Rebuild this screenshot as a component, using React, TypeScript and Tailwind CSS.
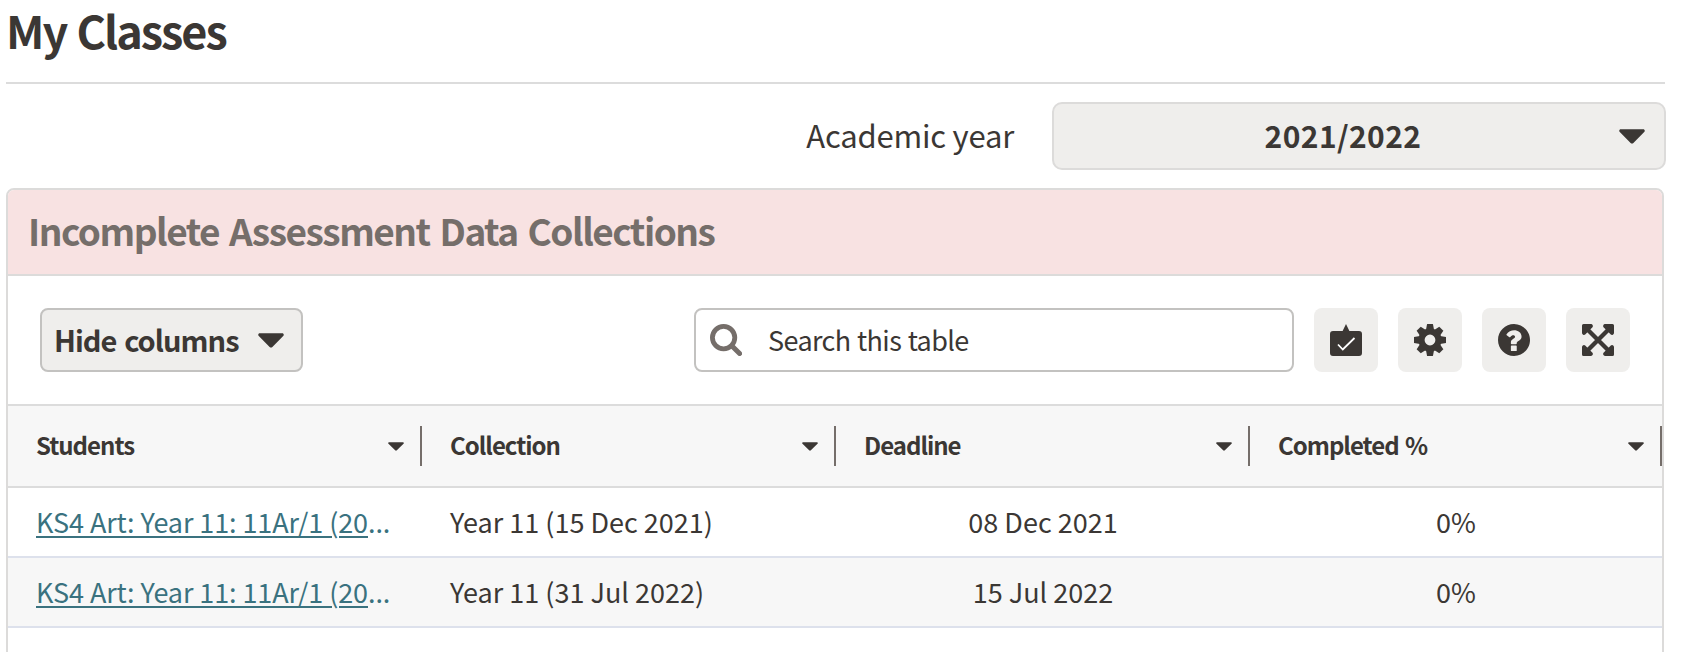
import { useState } from 'react'
import { clsx } from 'clsx'

const COLUMNS = [
  { key: 'students', label: 'Students' },
  { key: 'collection', label: 'Collection' },
  { key: 'deadline', label: 'Deadline' },
  { key: 'completed', label: 'Completed %' },
]

const ROWS = [
  { students: 'KS4 Art: Year 11: 11Ar/1 (20', collection: 'Year 11 (15 Dec 2021)', deadline: '08 Dec 2021', completed: '0%' },
  { students: 'KS4 Art: Year 11: 11Ar/1 (20', collection: 'Year 11 (31 Jul 2022)', deadline: '15 Jul 2022', completed: '0%' },
]

function Caret({ className }: { className?: string }) {
  return (
    <svg viewBox="0 0 26 15" preserveAspectRatio="none" className={clsx('shrink-0 fill-current', className)}>
      <path d="M1.8 0.3h22.4c1.5 0 2.1 1.7 1 2.8L14.4 13.9c-.8.8-2 .8-2.8 0L.8 3.1C-.3 2 .3.3 1.8.3Z" />
    </svg>
  )
}

function SearchIcon() {
  return (
    <svg viewBox="0 0 32 32" className="size-8 shrink-0 text-[#756e6a]" fill="none" stroke="currentColor">
      <circle cx="13.6" cy="13.6" r="11.2" strokeWidth="4.8" />
      <path d="M22 22l7.6 7.6" strokeWidth="5" strokeLinecap="round" />
    </svg>
  )
}

function CalendarIcon() {
  return (
    <svg viewBox="0 0 32 32" className="size-8">
      <path fill="currentColor" d="M16 0l3.4 7H29a3 3 0 0 1 3 3v19a3 3 0 0 1-3 3H3a3 3 0 0 1-3-3V10a3 3 0 0 1 3-3h9.6Z" />
      <path d="M8 20.5l4.800 5L24.5 14" fill="none" stroke="white" strokeWidth="1.8" />
    </svg>
  )
}

function GearIcon() {
  return (
    <svg viewBox="0 0 32 32" className="size-8" fill="currentColor">
      <circle cx="16" cy="16" r="8.5" fill="none" stroke="currentColor" strokeWidth="6.2" />
      {[0, 45, 90, 135, 180, 225, 270, 315].map(deg => (
        <path key={deg} d="M13.1 0h5.800l1.200 6h-8.200Z" transform={`rotate(${deg} 16 16)`} />
      ))}
    </svg>
  )
}

function HelpIcon() {
  return (
    <svg viewBox="0 0 512 512" className="size-8" fill="currentColor">
      <path d="M256 0C114.6 0 0 114.6 0 256s114.6 256 256 256 256-114.6 256-256S397.4 0 256 0Zm44 422c0 6-5 11-11 11h-72c-6 0-11-5-11-11v-68c0-6 5-11 11-11h72c6 0 11 5 11 11v68Zm77-218c0 61-70 66-77 97v11c0 6-5 11-11 11h-72c-6 0-11-5-11-11v-19c0-49 67-57 67-88 0-33-50-37-75 3-4 6-11 7-16 3l-42-30c-5-4-6-11-3-16 63-99 240-78 240 39Z" />
    </svg>
  )
}

function ExpandIcon() {
  return (
    <svg viewBox="0 0 32 32" className="size-8" fill="currentColor">
      <path d="M4 4l24 24M28 4L4 28" stroke="currentColor" strokeWidth="4.3" />
      <path d="M1.5 0H9a2 2 0 0 1 1.5 3.2L3.2 10.5A2 2 0 0 1 0 9V1.5A1.5 1.5 0 0 1 1.5 0ZM30.5 0H23a2 2 0 0 0-1.5 3.2l7.3 7.3A2 2 0 0 0 32 9V1.5A1.5 1.5 0 0 0 30.5 0ZM1.5 32H9a2 2 0 0 0 1.5-3.2l-7.3-7.3A2 2 0 0 0 0 23v7.5A1.5 1.5 0 0 0 1.5 32ZM30.5 32H23a2 2 0 0 1-1.5-3.2l7.3-7.3A2 2 0 0 1 32 23v7.5a1.5 1.5 0 0 1-1.5 1.5Z" />
    </svg>
  )
}

const ACTIONS = [
  { label: 'Calendar', Icon: CalendarIcon },
  { label: 'Settings', Icon: GearIcon },
  { label: 'Help', Icon: HelpIcon },
  { label: 'Full screen', Icon: ExpandIcon },
]

export default function App() {
  const [query, setQuery] = useState('')

  return (
    <div className="h-[652px] w-[1682px] overflow-hidden bg-white pl-1.5 font-['Noto_Sans_CJK_SC','Noto_Sans',sans-serif] text-[#3b3734]">
      <h1 className="h-[84px] w-[1659px] border-b-2 border-[#dcdcdc] text-[45px] leading-[60px] font-bold tracking-[-2px] [word-spacing:2px]">
        My Classes
      </h1>

      <div className="flex h-[104px] w-[1660px] items-center justify-end gap-[38px]">
        <span className="pb-0.5 text-[31px] tracking-[-0.2px]">Academic year</span>
        <button className="flex h-[68px] w-[614px] items-center rounded-[10px] border-2 border-[#dcdbda] bg-[#efeeec] pr-[19px] pl-[13px]">
          <span className="flex-1 pb-0.5 text-center text-[30px] font-bold tracking-[0.4px]">2021/2022</span>
          <Caret className="h-[15px] w-[26px]" />
        </button>
      </div>

      <section className="h-[480px] w-[1658px] overflow-hidden rounded-t-lg border-2 border-[#dcdbda]">
        <h2 className="h-[86px] border-b-2 border-[#dcdbda] bg-[#f8e2e2] pl-5 text-[37px] leading-[80px] font-bold tracking-[-1.5px] text-[#756e6a] [word-spacing:3px]">
          Incomplete Assessment Data Collections
        </h2>

        <div className="flex h-32 items-center gap-5 pr-8 pl-8">
          <button className="mr-auto flex h-16 w-[263px] items-center justify-between rounded-lg border-2 border-[#c3c2c0] bg-[#efeeec] pr-[17px] pl-3 text-[29px] font-bold tracking-[-0.95px] whitespace-nowrap [word-spacing:2px]">
            <span>Hide columns</span>
            <Caret className="h-[15px] w-[26px]" />
          </button>
          <label className="flex h-16 w-[600px] items-center gap-[26px] rounded-lg border-2 border-[#c3c2c0] pl-3.5">
            <SearchIcon />
            <input
              value={query}
              onChange={e => setQuery(e.target.value)}
              placeholder="Search this table"
              className="w-[480px] text-[27px] tracking-[-0.6px] outline-none placeholder:text-[#3b3734] [word-spacing:1px]"
            />
          </label>
          {ACTIONS.map(({ label, Icon }) => (
            <button key={label} aria-label={label} className="flex size-16 items-center justify-center rounded-lg bg-[#efeeec]">
              <Icon />
            </button>
          ))}
        </div>

        <div className="grid h-[84px] grid-cols-[414px_414px_414px_412px] items-center border-y-2 border-[#dcdcdc] bg-[#f7f7f7]">
          {COLUMNS.map(col => (
            <div key={col.key} className="flex h-10 items-center justify-between border-r-2 border-[#756e6a] pr-4 pl-7">
              <span className="pb-[3px] text-[24px] font-bold tracking-[-1px] [word-spacing:2px]">{col.label}</span>
              <Caret className="h-[9px] w-4" />
            </div>
          ))}
        </div>

        {ROWS.map((row, i) => (
          <div
            key={i}
            className={clsx(
              'grid h-[70px] grid-cols-[414px_414px_414px_412px] items-center border-b-2 border-[#dde1ec] text-[27px]',
              i % 2 === 1 && 'bg-[#f7f7f7]'
            )}
          >
            <div className="pl-7 tracking-[-0.1px] whitespace-nowrap text-[#3a727f]">
              <a className="underline decoration-2 underline-offset-[3px]">{row.students}</a>...
            </div>
            <div className="pl-7 whitespace-nowrap">{row.collection}</div>
            <div className="text-center">{row.deadline}</div>
            <div className="text-center">{row.completed}</div>
          </div>
        ))}
      </section>
    </div>
  )
}
